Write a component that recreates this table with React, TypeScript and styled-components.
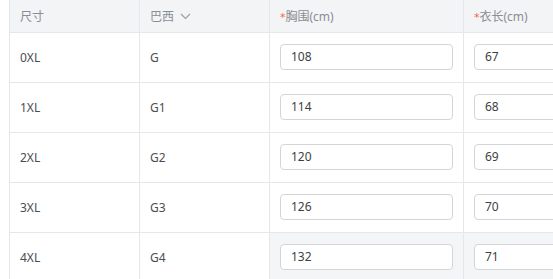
import React from "react";
import styled, { createGlobalStyle } from "styled-components";

const Global = createGlobalStyle`
  html, body {
    margin: 0;
    padding: 0;
    background: #fff;
  }
  body {
    font-family: "Noto Sans", "Noto Sans CJK SC", sans-serif;
    width: 553px;
    height: 279px;
    overflow: hidden;
  }
`;

const COLS = "130px 130px 194px 200px";

const Page = styled.div`
  padding-left: 9px;
  width: 553px;
  height: 279px;
  overflow: hidden;
  box-sizing: border-box;
`;

const Table = styled.div`
  display: grid;
  grid-template-columns: ${COLS};
  width: max-content;
`;

const HeadCell = styled.div`
  height: 32px;
  display: flex;
  align-items: center;
  gap: 6px;
  padding-left: 10px;
  background: #f3f4f6;
  border-left: 1px solid #e6e7ea;
  border-bottom: 1px solid #e6e7ea;
  font-size: 12px;
  color: #8a8d93;
  box-sizing: content-box;
`;

const Star = styled.span`
  color: #f4663a;
  font-family: "DejaVu Sans", sans-serif;
  font-size: 11px;
`;

const Cell = styled.div<{ $shade?: boolean }>`
  height: 49px;
  display: flex;
  align-items: center;
  padding: 0 10px;
  background: ${({ $shade }) => ($shade ? "#f4f5f7" : "#fff")};
  border-left: 1px solid #e6e7ea;
  border-bottom: 1px solid #e6e7ea;
  font-size: 12px;
  color: #4a4d52;
  box-sizing: content-box;
`;

const Input = styled.div`
  flex: 1;
  height: 24px;
  margin-top: -2px;
  display: flex;
  align-items: center;
  padding: 0 10px;
  border: 1px solid #d3d5da;
  border-radius: 4px;
  background: #fff;
  font-size: 12px;
  color: #3c3f44;
`;

const Chevron = () => (
  <svg width="11" height="7" viewBox="0 0 11 7" fill="none">
    <path d="M1 1l4.5 4.5L10 1" stroke="#9a9da3" strokeWidth="1.1" />
  </svg>
);

const rows = [
  { size: "0XL", br: "G", chest: "108", len: "67" },
  { size: "1XL", br: "G1", chest: "114", len: "68" },
  { size: "2XL", br: "G2", chest: "120", len: "69" },
  { size: "3XL", br: "G3", chest: "126", len: "70" },
  { size: "4XL", br: "G4", chest: "132", len: "71" },
];

export default function App() {
  return (
    <Page>
      <Global />
      <Table>
        <HeadCell>尺寸</HeadCell>
        <HeadCell>
          巴西 <Chevron />
        </HeadCell>
        <HeadCell>
          <span>
            <Star>*</Star>胸围(cm)
          </span>
        </HeadCell>
        <HeadCell>
          <span>
            <Star>*</Star>衣长(cm)
          </span>
        </HeadCell>
        {rows.map((r, i) => {
          const last = i === rows.length - 1;
          return (
            <React.Fragment key={r.size}>
              <Cell>{r.size}</Cell>
              <Cell>{r.br}</Cell>
              <Cell $shade={last}>
                <Input>{r.chest}</Input>
              </Cell>
              <Cell $shade={last}>
                <Input>{r.len}</Input>
              </Cell>
            </React.Fragment>
          );
        })}
      </Table>
    </Page>
  );
}
